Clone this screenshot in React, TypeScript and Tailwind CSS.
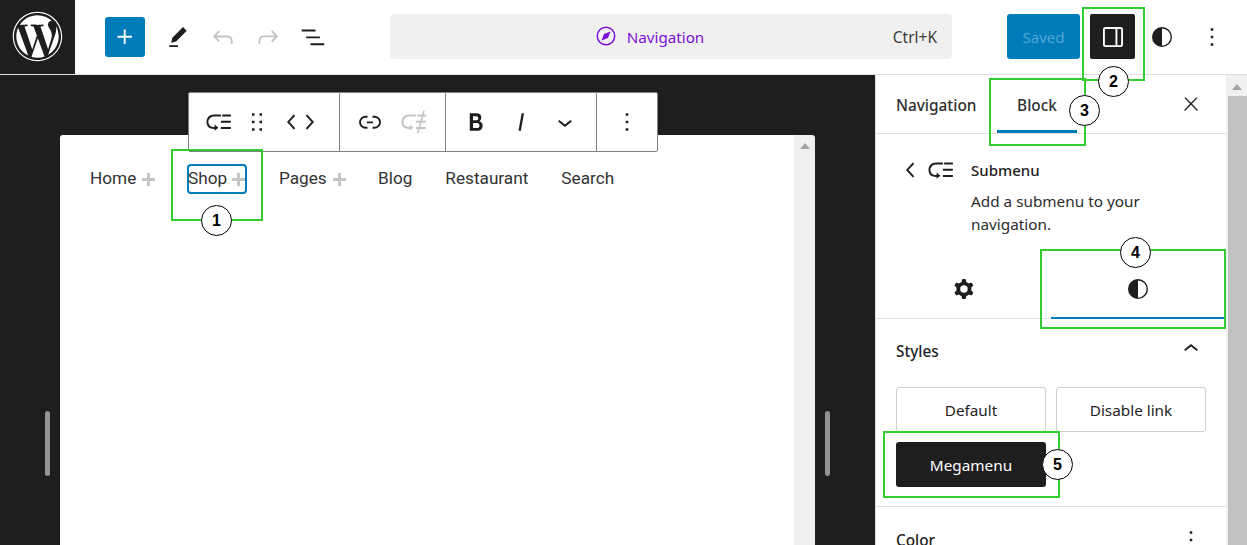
import React from "react";
import { FaWordpress } from "react-icons/fa";

const P: Record<string, string> = {
  plus: "M11 12.5V17.5H12.5V12.5H17.5V11H12.5V6H11V11H6V12.5H11Z",
  edit: "m19 7-3-3-8.5 8.5-1 4 4-1L19 7Zm-7 11.5H5V20h7v-1.5Z",
  undo: "M18.3 11.7c-.6-.6-1.4-.9-2.3-.9H6.7l2.9-3.3-1.1-1-4.5 5L8.5 16l1-1-2.7-2.7H16c.5 0 .9.2 1.3.5 1 1 1 3.4 1 4.5v.3h1.5v-.2c0-1.5 0-4.3-1.5-5.7z",
  redo: "M15.6 6.5l-1.1 1 2.9 3.3H8c-.9 0-1.7.3-2.3.9-1.4 1.5-1.4 4.2-1.4 5.6v.2h1.5v-.3c0-1.1 0-3.5 1-4.5.3-.3.7-.5 1.3-.5h9.2L14.5 15l1.1 1.1 4.6-4.6-4.6-5z",
  list: "M3 6h11v1.5H3V6Zm3.5 5.5h11V13h-11v-1.5ZM21 17H10v1.5h11V17Z",
  more: "M13 19h-2v-2h2v2zm0-6h-2v-2h2v2zm0-6h-2V5h2v2z",
  drag: "M8 7h2V5H8v2zm0 6h2v-2H8v2zm0 6h2v-2H8v2zm6-14v2h2V5h-2zm0 8h2v-2h-2v2zm0 6h2v-2h-2v2z",
  left: "M14.6 7l-1.2-1L8 12l5.4 6 1.2-1-4.6-5z",
  right: "M10.6 6L9.4 7l4.6 5-4.6 5 1.2 1 5.4-6z",
  link: "M10 17.389H8.444A5.194 5.194 0 1 1 8.444 7H10v1.5H8.444a3.694 3.694 0 0 0 0 7.389H10v1.5ZM14 7h1.556a5.194 5.194 0 0 1 0 10.39H14v-1.5h1.556a3.694 3.694 0 0 0 0-7.39H14V7Zm-4.5 6h5v-1.5h-5V13Z",
  bold: "M14.7 11.3c1-.6 1.5-1.6 1.5-3 0-2.3-1.3-3.4-4-3.4H7v14h5.8c1.4 0 2.5-.3 3.3-1 .8-.7 1.2-1.7 1.2-2.9.1-1.9-.8-3.1-2.6-3.7zm-5.1-4h2.3c.6 0 1.1.1 1.4.4.3.3.5.7.5 1.2s-.2 1-.5 1.2c-.3.3-.8.4-1.4.4H9.6V7.3zm4.6 9c-.4.3-1 .4-1.7.4H9.6v-3.9h2.9c.7 0 1.3.2 1.7.5.4.3.6.8.6 1.5s-.2 1.2-.6 1.5z",
  italic: "M12.5 5L10 19h1.9l2.5-14z",
  down: "M17.5 11.6L12 16l-5.5-4.4.9-1.2L12 14l4.5-3.6 1 1.2z",
  up: "M6.5 12.4L12 8l5.5 4.4-.9 1.2L12 10l-4.5 3.6-1-1.2z",
  close: "M13 11.8l6.1-6.3-1-1-6.1 6.2-6.1-6.2-1 1 6.1 6.3-6.5 6.7 1 1 6.5-6.6 6.5 6.6 1-1z",
  cog: "M10.289 4.836A1 1 0 0 1 11.275 4h1.306a1 1 0 0 1 .987.836l.244 1.466c.787.26 1.503.679 2.108 1.218l1.393-.522a1 1 0 0 1 1.216.437l.653 1.13a1 1 0 0 1-.23 1.273l-1.148.944a6.025 6.025 0 0 1 0 2.435l1.149.946a1 1 0 0 1 .23 1.272l-.653 1.13a1 1 0 0 1-1.216.437l-1.394-.522c-.605.54-1.32.958-2.108 1.218l-.244 1.466a1 1 0 0 1-.987.836h-1.306a1 1 0 0 1-.986-.836l-.244-1.466a5.995 5.995 0 0 1-2.108-1.218l-1.394.522a1 1 0 0 1-1.217-.436l-.653-1.131a1 1 0 0 1 .23-1.272l1.149-.946a6.026 6.026 0 0 1 0-2.435l-1.148-.944a1 1 0 0 1-.23-1.272l.653-1.131a1 1 0 0 1 1.217-.437l1.393.522a5.994 5.994 0 0 1 2.108-1.218l.244-1.466ZM14.929 12a3 3 0 1 1-6 0 3 3 0 0 1 6 0Z",
  submenu: "M2 12c0 3.6 2.4 5.5 6 5.5h.5V19l3-2.5-3-2.5v2H8c-2.5 0-4.5-1.5-4.5-4s2-4.5 4.5-4.5h6.5V6H8c-3.6 0-6 2.4-6 6zm19.5-1h-8v1.5h8V11zm0 5h-8v1.5h8V16zm0-10h-8v1.5h8V6z",
  contrast: "M12 4a8 8 0 1 0 0 16 8 8 0 0 0 0-16Zm0 14.9V5.1a6.9 6.9 0 0 1 0 13.8Z",
  sidebar: "M18 4H6a2 2 0 0 0-2 2v12a2 2 0 0 0 2 2h12a2 2 0 0 0 2-2V6a2 2 0 0 0-2-2ZM5.5 18V6c0-.3.2-.5.5-.5h8v13H6a.5.5 0 0 1-.5-.5Zm13 0c0 .3-.2.5-.5.5h-2.5v-13H18c.3 0 .5.2.5.5v12Z",
};

function Icon({ n, className = "", size = 30 }: { n: string; className?: string; size?: number }) {
  return (
    <svg viewBox="0 0 24 24" width={size} height={size} className={`shrink-0 fill-current ${className}`}>
      <path d={P[n]} fillRule="evenodd" clipRule="evenodd" />
    </svg>
  );
}

function Note({ c, n }: { c: string; n: number }) {
  return (
    <div className={`absolute w-[31px] h-[31px] rounded-full bg-white border border-black flex items-center justify-center text-[16px] font-bold text-black font-['Liberation_Sans',sans-serif] ${c}`}>
      {n}
    </div>
  );
}

function Box({ c }: { c: string }) {
  return <div className={`absolute border-2 border-[#33cc33] ${c}`} />;
}

function NavPlus({ c = "" }: { c?: string }) {
  return (
    <svg viewBox="0 0 16 16" width={13} height={13} className={`shrink-0 fill-[#c4c4c4] ${c}`}>
      <path d="M0 6.2h6.2V0h3.6v6.2H16v3.6H9.8V16H6.2V9.8H0z" />
    </svg>
  );
}

function Grp({ children, c }: { children: React.ReactNode; c: string }) {
  return <div className={`flex items-center h-full ${c}`}>{children}</div>;
}

export default function App() {
  return (
    <div className="relative w-[1247px] h-[545px] overflow-hidden flex flex-col bg-white text-[#1e1e1e] font-['Noto_Sans',sans-serif]">
      {/* top bar */}
      <header className="h-[75px] shrink-0 flex items-center border-b border-[#e0e0e0] bg-white">
        <div className="w-[75px] h-[75px] -mt-px bg-[#1e1e1e] flex items-center justify-center text-white">
          <FaWordpress size={51} />
        </div>
        <div className="ml-[30px] w-[40px] h-[40px] rounded-[3px] bg-[#007cba] text-white flex items-center justify-center -mt-[1px]">
          <Icon n="plus" />
        </div>
        <Icon n="edit" className="ml-[18px] -mt-[1px]" />
        <Icon n="undo" className="ml-[15px] text-[#c4c4c4] -mt-[1px]" />
        <Icon n="redo" className="ml-[15px] text-[#c4c4c4] -mt-[1px]" />
        <Icon n="list" className="ml-[15px] -mt-[1px]" />
        <div className="ml-[62px] w-[562px] h-[45px] -mt-[1px] rounded-[4px] bg-[#f0f0f0] relative flex items-center justify-center text-[15.2px] text-[#7c0fd6]">
          <div className="flex items-center mr-[44px]">
            <svg viewBox="0 0 24 24" width={24} height={24} className="mr-[9px] fill-[#7c0fd6]">
              <path fillRule="evenodd" d="M12 2.5a9.5 9.5 0 1 0 0 19 9.5 9.5 0 0 0 0-19ZM4 12a8 8 0 1 1 16 0 8 8 0 0 1-16 0Z" />
              <path d="M16.5 7.5 14 14l-6.5 2.5L10 10l6.5-2.5Z" />
            </svg>
            <span className="pt-[2px]">Navigation</span>
          </div>
          <span className="absolute right-[15px] pt-[2px] text-[15.5px] text-[#3c3c3c]">Ctrl+K</span>
        </div>
        <div className="ml-[55px] w-[73px] h-[45px] -mt-[1px] pt-[2px] rounded-[3px] bg-[#007cba] text-[#55a5d2] text-[15px] flex items-center justify-center">Saved</div>
        <div className="ml-[10px] w-[45px] h-[45px] -mt-[1px] rounded-[2px] bg-[#1e1e1e] text-white flex items-center justify-center">
          <Icon n="sidebar" />
        </div>
        <Icon n="contrast" className="ml-[12px] -mt-[1px]" />
        <Icon n="more" className="ml-[20px] -mt-[1px]" />
      </header>

      <div className="flex-1 flex min-h-0">
        {/* editor */}
        <main className="w-[875px] shrink-0 bg-[#1e1e1e] flex">
          <div className="w-[60px] shrink-0 pl-[45px] pt-[336px]">
            <div className="w-[5px] h-[65px] rounded-full bg-[#949494]" />
          </div>
          <div className="w-[755px] shrink-0 mt-[60px] flex rounded-t-[3px] overflow-hidden">
            <div className="w-[734px] bg-white flex items-start pt-[29px] pl-[30px] text-[17.2px] text-[#333] font-['Roboto',sans-serif]">
              <div className="flex items-center h-[30px]">
                <span className="w-[46px]">Home</span>
                <NavPlus c="ml-[6px] mr-[32px]" />
              </div>
              <div className="flex items-center h-[30px] w-[60px] border-2 border-[#007cba] rounded-[4px] mr-[32px]">
                <span className="-ml-[1px] w-[39px] shrink-0">Shop</span>
                <NavPlus c="ml-[5px]" />
              </div>
              <div className="flex items-center h-[30px]">
                <span className="w-[48px]">Pages</span>
                <NavPlus c="ml-[6px]" />
              </div>
              <div className="flex items-center h-[30px] ml-[32px]">Blog</div>
              <div className="flex items-center h-[30px] ml-[33px]">Restaurant</div>
              <div className="flex items-center h-[30px] ml-[33px]">Search</div>
            </div>
            <div className="w-[21px] bg-[#f0f0f0] flex justify-center pt-[8px]">
              <div className="w-0 h-0 border-x-[5px] border-x-transparent border-b-[6px] border-b-[#a3a3a3]" />
            </div>
          </div>
          <div className="w-[60px] shrink-0 pl-[10px] pt-[336px]">
            <div className="w-[5px] h-[65px] rounded-full bg-[#949494]" />
          </div>
        </main>

        {/* sidebar */}
        <aside className="w-[351px] shrink-0 border-l border-[#e0e0e0] flex flex-col">
          <div className="h-[59px] shrink-0 border-b border-[#e0e0e0] flex items-center text-[15.4px]">
            <span className="ml-[20px] w-[81px] pt-[3px] font-medium text-[#2f2f2f] whitespace-nowrap">Navigation</span>
            <div className="ml-[20px] w-[80px] h-[58px] pt-[6px] border-b-[3px] border-[#007cba] flex items-center justify-center font-medium text-[#2f2f2f]">
              <span>Block</span>
            </div>
            <Icon n="close" size={22} className="ml-[103px] -mt-[1px]" />
          </div>
          <div className="flex pt-[21px] h-[131px] shrink-0">
            <Icon n="left" className="ml-[20px]" size={30} />
            <Icon n="submenu" size={30} />
            <div className="ml-[15px] w-[200px]">
              <div className="text-[15px] font-medium leading-[30px]">Submenu</div>
              <div className="text-[15.3px] leading-[23px] mt-[5px] text-[#2c2c2c]">Add a submenu to your navigation.</div>
            </div>
          </div>
          <div className="h-[54px] shrink-0 flex border-b border-[#e0e0e0] pl-px">
            <div className="w-[174px] flex items-center justify-center pb-[5px]">
              <Icon n="cog" />
            </div>
            <div className="w-[174px] -mb-px border-b-[2px] border-[#007cba] flex items-center justify-center pb-[5px]">
              <Icon n="contrast" />
            </div>
          </div>
          <div className="h-[188px] shrink-0 border-b border-[#e0e0e0] pl-[20px] pr-[20px]">
            <div className="flex items-center justify-between h-[68px] pb-[3px]">
              <span className="text-[15.3px] font-medium">Styles</span>
              <Icon n="up" size={30} className="-mt-[5px]" />
            </div>
            <div className="flex flex-wrap gap-[10px] text-[15.3px]">
              <div className="w-[150px] h-[45px] pt-[2px] border border-[#cfcfcf] rounded-[3px] flex items-center justify-center">Default</div>
              <div className="w-[150px] h-[45px] pt-[2px] border border-[#cfcfcf] rounded-[3px] flex items-center justify-center">Disable link</div>
              <div className="w-[150px] h-[45px] pt-[2px] rounded-[3px] bg-[#1e1e1e] text-white flex items-center justify-center">Megamenu</div>
            </div>
          </div>
          <div className="flex items-center justify-between pl-[20px] pr-[20px] pt-[18px]">
            <span className="text-[15.3px] font-medium">Color</span>
            <Icon n="more" size={30} />
          </div>
        </aside>

        {/* sidebar scrollbar */}
        <div className="w-[21px] shrink-0 bg-[#f0f0f0] flex flex-col">
          <div className="h-[21px] shrink-0 flex justify-center pt-[9px]">
            <div className="w-0 h-0 border-x-[5px] border-x-transparent border-b-[6px] border-b-[#a3a3a3]" />
          </div>
          <div className="flex-1 ml-[2px] bg-[#c1c1c1]" />
        </div>
      </div>

      {/* floating block toolbar */}
      <div className="absolute left-[188px] top-[92px] w-[470px] h-[60px] bg-white border-[1.5px] border-[#808080] rounded-[2px] flex items-center text-[#1e1e1e]">
        <Grp c="w-[151px] border-r-[1.5px] border-[#808080] pl-[15px]">
          <Icon n="submenu" />
          <Icon n="drag" className="ml-[8px]" />
          <Icon n="left" className="ml-[5px] -mr-[13px]" />
          <Icon n="right" />
        </Grp>
        <Grp c="w-[106px] border-r-[1.5px] border-[#808080] pl-[15px]">
          <Icon n="link" />
          <div className="relative ml-[14px] text-[#c4c4c4]">
            <Icon n="submenu" />
            <svg viewBox="0 0 24 24" width={30} height={30} className="absolute inset-0 stroke-[#c4c4c4]">
              <path d="M15 21 20 3" strokeWidth="1.3" />
            </svg>
          </div>
        </Grp>
        <Grp c="w-[151px] border-r-[1.5px] border-[#808080] pl-[15px]">
          <Icon n="bold" />
          <Icon n="italic" className="ml-[15px]" />
          <Icon n="down" className="ml-[14px]" />
        </Grp>
        <Grp c="pl-[15px]">
          <Icon n="more" />
        </Grp>
      </div>

      {/* annotations */}
      <Box c="left-[171px] top-[149px] w-[92px] h-[72px]" />
      <Box c="left-[1082px] top-[7px] w-[63px] h-[74px]" />
      <Box c="left-[989px] top-[78px] w-[97px] h-[68px]" />
      <Box c="left-[1040px] top-[249px] w-[186px] h-[80px]" />
      <Box c="left-[883px] top-[431px] w-[177px] h-[67px]" />
      <Note c="left-[201px] top-[205px]" n={1} />
      <Note c="left-[1098px] top-[66px]" n={2} />
      <Note c="left-[1069px] top-[95px]" n={3} />
      <Note c="left-[1120px] top-[237px]" n={4} />
      <Note c="left-[1042px] top-[449px]" n={5} />
    </div>
  );
}
